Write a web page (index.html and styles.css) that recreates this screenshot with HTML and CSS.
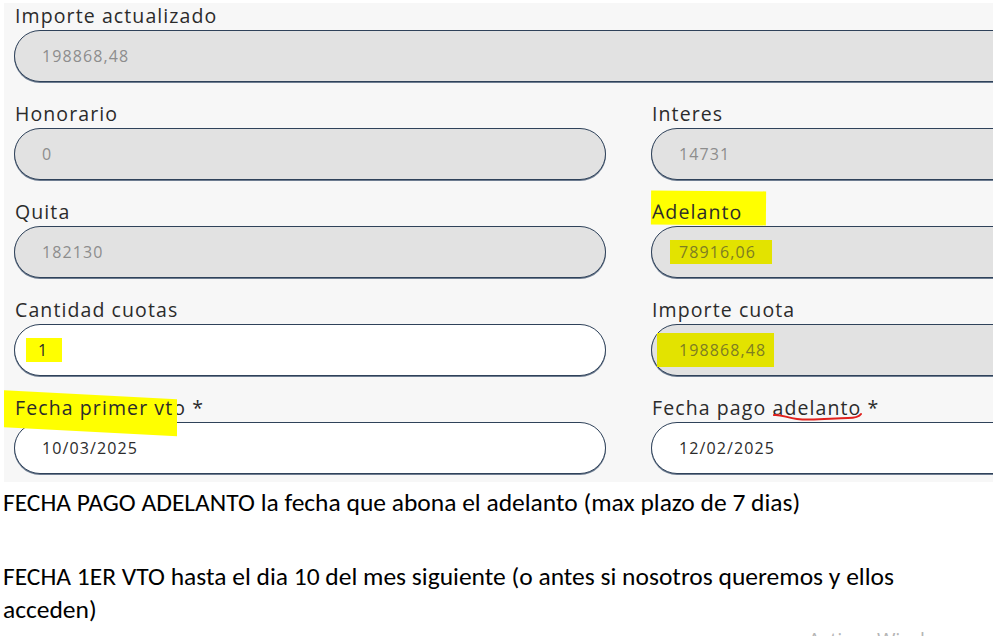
FILE: index.html
```html
<!DOCTYPE html>
<html lang="es">
<head>
<meta charset="utf-8">
<title>Formulario</title>
<link rel="stylesheet" href="styles.css">
</head>
<body>
<div class="page">
  <div class="panel">
    <div class="grid">
      <div class="field full">
        <label class="label">Importe actualizado</label>
        <div class="input disabled">198868,48</div>
      </div>
      <div class="field">
        <label class="label">Honorario</label>
        <div class="input disabled">0</div>
      </div>
      <div class="field">
        <label class="label">Interes</label>
        <div class="input disabled">14731</div>
      </div>
      <div class="field">
        <label class="label">Quita</label>
        <div class="input disabled">182130</div>
      </div>
      <div class="field">
        <label class="label"><span class="hl hl-label-adelanto">Adelanto</span></label>
        <div class="input disabled"><span class="hl hl-val hl-adelanto">78916,06</span></div>
      </div>
      <div class="field">
        <label class="label">Cantidad cuotas</label>
        <div class="input"><span class="hl hl-one">1</span></div>
      </div>
      <div class="field">
        <label class="label">Importe cuota</label>
        <div class="input disabled"><span class="hl hl-val hl-cuota">198868,48</span></div>
      </div>
      <div class="field">
        <label class="label"><span class="hl-vto">Fecha primer vt</span>o *</label>
        <div class="input">10/03/2025</div>
      </div>
      <div class="field">
        <label class="label">Fecha pago <span class="squiggle">adelanto<svg class="squiggle-mark" width="90" height="10" viewBox="0 0 90 10"><path d="M1 3 C 8 2, 14 6, 24 7 C 40 9, 60 6, 75 6 C 82 6, 86 5, 88 2" fill="none" stroke="#e0201c" stroke-width="2" stroke-linecap="round"/></svg></span> *</label>
        <div class="input">12/02/2025</div>
      </div>
    </div>
  </div>
  <div class="notes">
    <p class="note">FECHA PAGO ADELANTO la fecha que abona el adelanto (max plazo de 7 dias)</p>
    <p class="note">FECHA 1ER VTO hasta el dia 10 del mes siguiente (o antes si nosotros queremos y ellos acceden)</p>
  </div>
  <div class="watermark">Activar Windows</div>
</div>
</body>
</html>
```

FILE: styles.css
```css
html, body {
  margin: 0;
  padding: 0;
  background: #ffffff;
}

.page {
  position: relative;
  width: 999px;
  height: 636px;
  overflow: hidden;
}

.panel {
  margin: 3px 0 0 4px;
  width: 989px;
  background: #f7f7f7;
  overflow: hidden;
  padding: 0 0 8px 10px;
  box-sizing: border-box;
}

.grid {
  display: grid;
  grid-template-columns: 592px 592px;
  column-gap: 45px;
  row-gap: 19px;
  width: 1229px;
}

.field {
  display: flex;
  flex-direction: column;
  gap: 2px;
}

.field.full {
  grid-column: 1 / span 2;
}

.label {
  display: block;
  height: 25px;
  line-height: 25px;
  padding-left: 1px;
  font-family: "Open Sans", sans-serif;
  font-size: 19.5px;
  letter-spacing: 1.1px;
  color: #2b2b2b;
  white-space: nowrap;
}

.input {
  box-sizing: border-box;
  height: 52px;
  border: 1px solid #2f425a;
  border-radius: 26px;
  background: #ffffff;
  padding-left: 27px;
  display: flex;
  align-items: center;
  font-family: "Open Sans", sans-serif;
  font-size: 16px;
  letter-spacing: 1.1px;
  color: #2b2b2b;
  box-shadow: 0 1px 0 #6d7c90;
}

.input.disabled {
  background: #e2e2e2;
  color: #8d8d8d;
}

.hl {
  background: #ffff00;
}

.hl-label-adelanto {
  display: inline-block;
  padding: 9px 24px 1px 1px;
  margin: -9px 0 0 -1px;
  line-height: 24px;
  transform: rotate(0.4deg);
}

.hl-val {
  display: inline-block;
  background: #e3e300;
  color: #7d7d22;
  line-height: 24px;
}

.hl-adelanto {
  padding: 0 16px 0 9px;
  margin-left: -9px;
}

.hl-cuota {
  padding: 5px 8px 5px 22px;
  margin-left: -22px;
}

.hl-one {
  display: inline-block;
  line-height: 24px;
  padding: 0 14px 0 12px;
  margin-left: -16px;
  color: #2b2b2b;
}

.hl-vto {
  position: relative;
  z-index: 0;
}

.hl-vto::before {
  content: "";
  position: absolute;
  left: -15px;
  right: -4px;
  top: -4px;
  bottom: -6px;
  background: #ffff00;
  transform: skewY(3deg);
  transform-origin: left center;
  z-index: -1;
}

.squiggle {
  position: relative;
}

.squiggle-mark {
  position: absolute;
  left: 1px;
  top: 18px;
}

.notes {
  padding: 4px 0 0 3px;
}

.note {
  margin: 0 0 41px 0;
  font-family: Carlito, "Liberation Sans", sans-serif;
  font-size: 25.5px;
  line-height: 33px;
  color: #000000;
  width: 940px;
}

.watermark {
  position: absolute;
  left: 808px;
  top: 626px;
  font-family: "Open Sans", sans-serif;
  font-size: 20px;
  color: #b5b5b5;
  white-space: nowrap;
}
```
